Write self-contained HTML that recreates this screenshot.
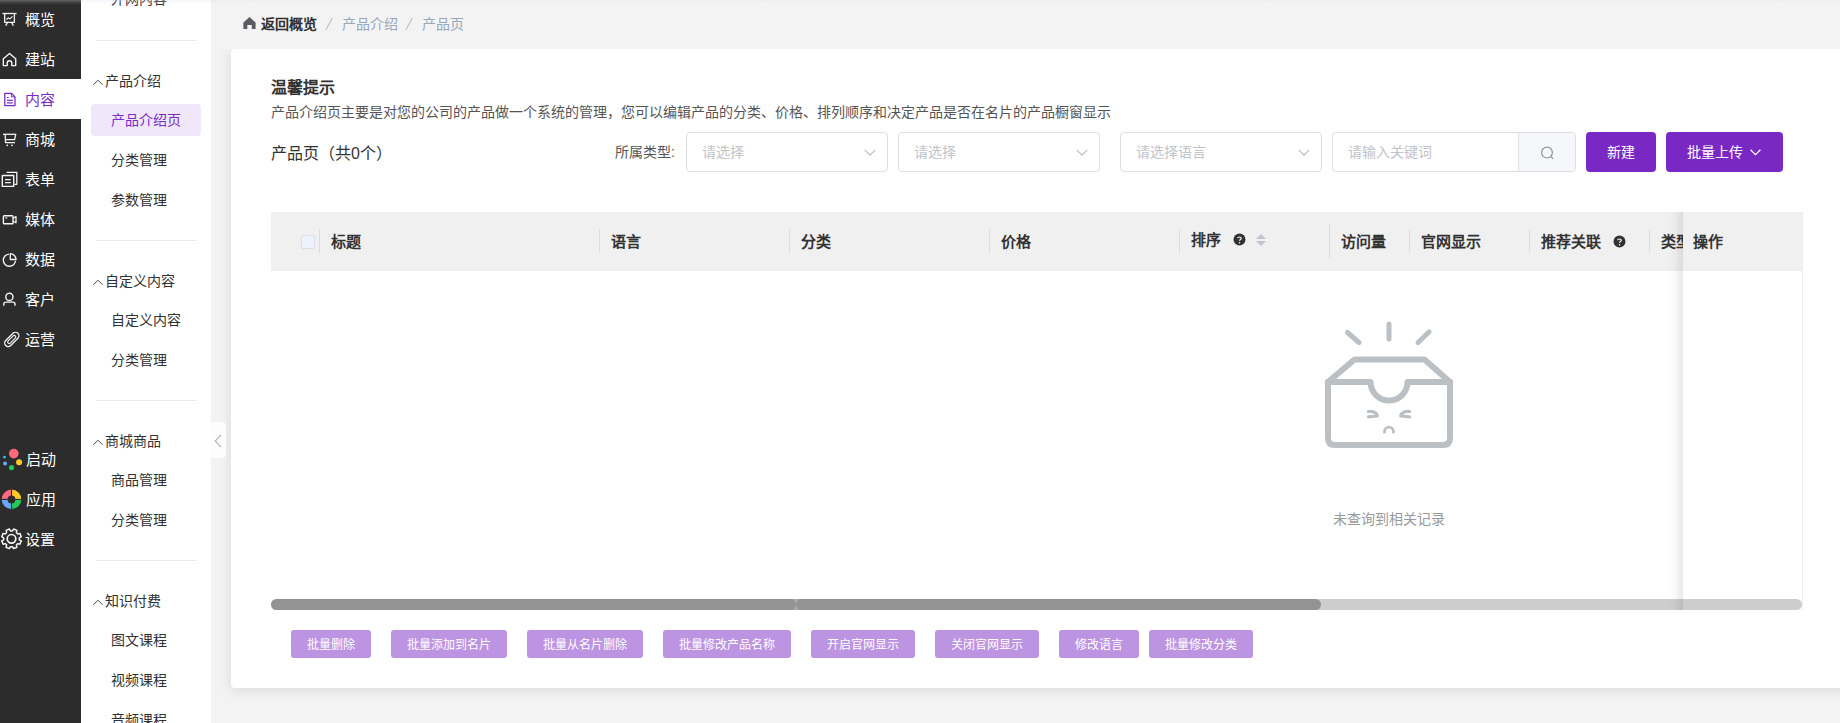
<!DOCTYPE html>
<html lang="zh-CN">
<head>
<meta charset="utf-8">
<title>产品页</title>
<style>
*{box-sizing:border-box;margin:0;padding:0}
html,body{width:1840px;height:723px;overflow:hidden}
body{position:relative;background:#f3f3f3;font-family:"Liberation Sans",sans-serif;font-size:14px;color:#333;-webkit-font-smoothing:antialiased}
.a{position:absolute;white-space:nowrap}
svg{position:absolute;overflow:visible}

#nav1 .t,#nav2 .g,#nav2 .i,.bc,.a,.ph,.th,.bb,.btn{text-align:justify;text-align-last:justify}
/* ---------- dark primary sidebar ---------- */
#nav1{position:absolute;left:0;top:0;width:81px;height:723px;background:#2c2c2c}
#nav1 .on{position:absolute;left:0;top:79px;width:81px;height:40px;background:#fff}
#nav1 .t{position:absolute;left:25px;height:40px;line-height:42px;font-size:15px;color:#fff;white-space:nowrap}
#nav1 .t.p{color:#7a2bc8}
#topshade{position:absolute;left:0;top:0;width:1840px;height:5px;background:linear-gradient(to bottom,rgba(222,226,238,.33),rgba(222,226,238,.12) 45%,rgba(222,226,238,0));z-index:50;pointer-events:none}

/* ---------- light secondary sidebar ---------- */
#nav2{position:absolute;left:81px;top:0;width:130px;height:723px;background:#fff}
#nav2 .hr{position:absolute;left:15px;width:100px;height:1px;background:#e6e9f2}
#nav2 .g{position:absolute;left:24px;height:40px;line-height:40px;font-size:14px;color:#303133;white-space:nowrap}
#nav2 .i{position:absolute;left:30px;height:40px;line-height:40px;font-size:14px;color:#303133;white-space:nowrap}
#nav2 .act{position:absolute;left:10px;top:104px;width:110px;height:32px;border-radius:4px;background:#f0e8fa}
#nav2 .i.p{color:#7a2bc8}

/* collapse handle */
#handle{position:absolute;left:211px;top:422px;width:15px;height:36px;background:#fdfdfd;border-radius:0 4px 4px 0}

/* ---------- breadcrumb ---------- */
.bc{position:absolute;top:12px;height:24px;line-height:24px;font-size:14px;white-space:nowrap}

/* ---------- card ---------- */
#cardclip{position:absolute;left:211px;top:49px;width:1629px;height:674px;overflow:hidden}
#card{position:absolute;left:20px;top:0;width:1700px;height:639px;background:#fff;border-radius:4px;box-shadow:0 2px 14px 0 rgba(0,0,0,.11)}

/* form controls */
.sel{position:absolute;top:132px;height:40px;border:1px solid #dcdfe6;border-radius:4px;background:#fff}
.ph{position:absolute;left:15px;top:0;height:38px;line-height:38px;font-size:14px;color:#c0c4cc;white-space:nowrap}
.btn{position:absolute;top:132px;height:40px;line-height:40px;border-radius:4px;background:#7a28c4;color:#fff;font-size:14px;white-space:nowrap}

/* table */
#thead{position:absolute;left:271px;top:212px;width:1531px;height:59px;background:#f0f0f0;border-bottom:1px solid #e9ecf3}
.th{position:absolute;height:24px;line-height:24px;font-size:15px;font-weight:bold;color:#333;white-space:nowrap}
.sp{position:absolute;width:1px;background:#dcdcdc}
#fix{position:absolute;left:1683px;top:212px;width:120px;height:398px;background:#fff;border-right:1px solid #ebeef5}
#fixsh{position:absolute;left:1669px;top:212px;width:14px;height:398px;background:linear-gradient(to right,rgba(0,0,0,0),rgba(0,0,0,.025) 45%,rgba(0,0,0,.085))}
#fixh{position:absolute;left:0;top:0;width:119px;height:59px;background:#f0f0f0;border-bottom:1px solid #e9ecf3}

/* bottom buttons */
.bb{position:absolute;top:630px;height:28px;line-height:30px;font-weight:500;border-radius:3px;background:#bd94e2;color:#fff;font-size:12px;padding:0 16px;white-space:nowrap}
</style>
</head>
<body>

<!-- ================= PRIMARY NAV ================= -->
<div id="nav1">
  <div class="on"></div>
  <div class="t" style="top:-1px;width:30.00px">概览</div>
  <div class="t" style="top:39px;width:30.00px">建站</div>
  <div class="t p" style="top:79px;width:30.00px">内容</div>
  <div class="t" style="top:119px;width:30.00px">商城</div>
  <div class="t" style="top:159px;width:30.00px">表单</div>
  <div class="t" style="top:199px;width:30.00px">媒体</div>
  <div class="t" style="top:239px;width:30.00px">数据</div>
  <div class="t" style="top:279px;width:30.00px">客户</div>
  <div class="t" style="top:319px;width:30.00px">运营</div>
  <div class="t" style="top:439px;left:26px;width:30.00px">启动</div>
  <div class="t" style="top:479px;left:26px;width:30.00px">应用</div>
  <div class="t" style="top:519px;left:25px;width:30.00px">设置</div>
  <!--NAV1ICONS-->
<svg style="left:0;top:0" width="81" height="723" viewBox="0 0 81 723" fill="none" stroke="#f5f5f5" stroke-width="1.3" stroke-linejoin="round">
<path d="M2.4 13.5 H16.6"/><path d="M4.7 13.5 V22.3 H14.4 V13.5"/><path d="M7.5 22.4 L5.7 25.8 M11.6 22.4 L13.4 25.8"/><path d="M6.6 19.5 L8.2 17.8 L10 18.9 L12.5 16.3" stroke-width="1.1"/>
<path d="M3.3 65.6 V58.7 L9.5 53.5 L15.7 58.7 V65.6 H11.8 V63 A2.3 2.3 0 0 0 7.2 63 V65.6 Z" stroke-width="1.4"/>
<g stroke="#7a2bc8"><path d="M4.8 93.3 H11.4 L15 96.9 V105.6 H4.8 Z"/><path d="M11.4 93.3 V96.9 H15" stroke-width="1"/><path d="M7 97.5 H8.8 M7 100.3 H12.8 M7 102.8 H12.8" stroke-width="1.2"/></g>
<path d="M3 134.3 H16.2"/><path d="M5.2 134.3 L5.5 142.6 H15"/><path d="M15.7 134.4 L14.6 139.6 H5.4"/><circle cx="7.3" cy="145.3" r="0.9" fill="#f5f5f5" stroke="none"/><circle cx="12" cy="145.3" r="0.9" fill="#f5f5f5" stroke="none"/>
<path d="M2.3 175.5 H13.7 V186.4 H2.3 Z" stroke-width="1.4"/><path d="M6.6 172.4 H16.8 V184.3 H14.4"/><path d="M5 179.6 H10.8 M5 182.6 H10.8"/>
<rect x="3.4" y="215.7" width="9.6" height="8" rx="0.8" stroke-width="1.4"/><path d="M13.2 218.2 L16 216.6 V222.8 L13.2 221.2"/><path d="M5.2 217.9 H7.4" stroke-width="1"/>
<path d="M9 254.1 A6.1 6.1 0 1 0 15.5 260.7" stroke-width="1.35"/><path d="M10.3 253.7 V259.5 H16.1 A5.9 5.9 0 0 0 10.3 253.7 Z"/>
<circle cx="9.4" cy="296.9" r="3.6" stroke-width="1.4"/><path d="M3.8 305.8 V304.2 A2.1 2.1 0 0 1 5.9 302.1 H12.9 A2.1 2.1 0 0 1 15 304.2 V305.8" stroke-width="1.4"/>
<g transform="translate(11.6 339.6) rotate(-45)" stroke-width="1.3"><path d="M6.6 -3.5 H-4.8 A3.5 3.5 0 0 0 -4.8 3.5 H5.4 A3.5 3.5 0 0 0 5.4 -3.5"/><path d="M3.8 -1.5 H-3.4 A1.5 1.5 0 0 0 -3.4 1.5 H3.8 A1.5 1.5 0 0 0 3.8 -1.5 Z" stroke-width="1.1"/></g>
<g stroke="none"><circle cx="13.8" cy="453.6" r="4.8" fill="#ff6b7a"/><circle cx="19.1" cy="462.2" r="3" fill="#ffc926"/><circle cx="11.5" cy="467.6" r="2.6" fill="#1fcc55"/><circle cx="5.1" cy="463.5" r="2" fill="#66a8ff"/><circle cx="4.5" cy="457.2" r="1.4" fill="#19c5f5"/></g>
<g stroke="none"><path d="M1.70 499.40 A9.8 9.8 0 0 1 11.50 489.60 L11.50 495.50 A3.9 3.9 0 0 0 7.60 499.40 Z" fill="#ff6b7a"/><path d="M11.50 489.60 A9.8 9.8 0 0 1 21.30 499.40 L15.40 499.40 A3.9 3.9 0 0 0 11.50 495.50 Z" fill="#ffc926"/><path d="M21.30 499.40 A9.8 9.8 0 0 1 11.50 509.20 L11.50 503.30 A3.9 3.9 0 0 0 15.40 499.40 Z" fill="#1fcc55"/><path d="M11.50 509.20 A9.8 9.8 0 0 1 1.70 499.40 L7.60 499.40 A3.9 3.9 0 0 0 11.50 503.30 Z" fill="#66a8ff"/><rect x="10.95" y="489.40" width="1.1" height="20" fill="#2c2c2c"/><rect x="1.50" y="498.85" width="20" height="1.1" fill="#2c2c2c"/></g>
<path d="M12.49 530.96 L13.60 529.02 L16.92 530.40 L16.34 532.56 L17.74 533.96 L19.90 533.38 L21.28 536.70 L19.34 537.81 L19.34 539.79 L21.28 540.90 L19.90 544.22 L17.74 543.64 L16.34 545.04 L16.92 547.20 L13.60 548.58 L12.49 546.64 L10.51 546.64 L9.40 548.58 L6.08 547.20 L6.66 545.04 L5.26 543.64 L3.10 544.22 L1.72 540.90 L3.66 539.79 L3.66 537.81 L1.72 536.70 L3.10 533.38 L5.26 533.96 L6.66 532.56 L6.08 530.40 L9.40 529.02 L10.51 530.96 Z" stroke-width="1.5"/>
<circle cx="11.5" cy="538.8" r="4.3" stroke-width="1.7"/>
</svg>
<!--/NAV1ICONS-->
</div>

<!-- ================= SECONDARY NAV ================= -->
<div id="nav2">
  <div class="i" style="top:-21px;width:56.00px">外网内容</div>
  <div class="hr" style="top:40px"></div>
  <div class="g" style="top:61px;width:56.00px">产品介绍</div>
  <div class="act"></div>
  <div class="i p" style="top:100px;width:70.00px">产品介绍页</div>
  <div class="i" style="top:140px;width:56.00px">分类管理</div>
  <div class="i" style="top:180px;width:56.00px">参数管理</div>
  <div class="hr" style="top:240px"></div>
  <div class="g" style="top:261px;width:70.00px">自定义内容</div>
  <div class="i" style="top:300px;width:70.00px">自定义内容</div>
  <div class="i" style="top:340px;width:56.00px">分类管理</div>
  <div class="hr" style="top:400px"></div>
  <div class="g" style="top:421px;width:56.00px">商城商品</div>
  <div class="i" style="top:460px;width:56.00px">商品管理</div>
  <div class="i" style="top:500px;width:56.00px">分类管理</div>
  <div class="hr" style="top:560px"></div>
  <div class="g" style="top:581px;width:56.00px">知识付费</div>
  <div class="i" style="top:620px;width:56.00px">图文课程</div>
  <div class="i" style="top:660px;width:56.00px">视频课程</div>
  <div class="i" style="top:700px;width:56.00px">音频课程</div>
  <!--NAV2ICONS-->
<svg style="left:0;top:0" width="130" height="723" viewBox="81 0 130 723" fill="none" stroke="#444" stroke-width="1"><path d="M93.5 84.7 L98 80.2 L102.5 84.7"/><path d="M93.5 284.7 L98 280.2 L102.5 284.7"/><path d="M93.5 444.7 L98 440.2 L102.5 444.7"/><path d="M93.5 604.7 L98 600.2 L102.5 604.7"/></svg>
<!--/NAV2ICONS-->
</div>

<!-- ================= CARD ================= -->
<div id="cardclip"><div id="card"></div></div>
<div id="handle"><svg style="left:3px;top:12px" width="8" height="14" viewBox="0 0 8 14"><path d="M7 0.8 L1.2 7 L7 13.2" fill="none" stroke="#b0b0b0" stroke-width="1.1"/></svg></div>
<!-- breadcrumb -->
<svg style="left:242.6px;top:17px" width="13" height="12" viewBox="0 0 13 12"><path d="M6.5 0 L12.6 5.4 L12.6 12 L8.8 12 L8.8 8 L4.3 8 L4.3 12 L0.4 12 L0.4 5.4 Z" fill="#5b5b63"/></svg>
<div class="bc" style="left:261px;font-weight:bold;color:#303133;width:56.00px">返回概览</div>
<svg style="left:324px;top:16px" width="10" height="15" viewBox="324 16 10 15"><path d="M325.9 29.8 L332.3 18" stroke="#c0c4cc" stroke-width="1.3" fill="none"/></svg>
<div class="bc" style="left:342px;color:#97a8be;width:56.00px">产品介绍</div>
<svg style="left:404px;top:16px" width="10" height="15" viewBox="404 16 10 15"><path d="M405.9 29.8 L412.3 18" stroke="#c0c4cc" stroke-width="1.3" fill="none"/></svg>
<div class="bc" style="left:422px;color:#97a8be;width:42.00px">产品页</div>

<!-- tips -->
<div class="a" style="left:271px;top:76px;height:24px;line-height:24px;font-size:16px;font-weight:bold;color:#333;width:64.00px">温馨提示</div>
<div class="a" style="left:271px;top:101px;height:22px;line-height:22px;font-size:14px;color:#555;width:840.00px">产品介绍页主要是对您的公司的产品做一个系统的管理，您可以编辑产品的分类、价格、排列顺序和决定产品是否在名片的产品橱窗显示</div>
<div class="a" style="left:271px;top:142px;height:24px;line-height:24px;font-size:16px;color:#333;width:120.91px">产品页（共0个）</div>

<!-- filters -->
<div class="a" style="left:615px;top:140px;height:24px;line-height:24px;font-size:14px;color:#555;width:59.89px">所属类型:</div>
<div class="sel" style="left:686px;width:202px"><div class="ph" style="width:42.00px">请选择</div>
  <svg style="left:177px;top:16px" width="12" height="7" viewBox="0 0 12 7"><path d="M0.7 0.9 L6 6 L11.3 0.9" fill="none" stroke="#c0c4cc" stroke-width="1.3"/></svg></div>
<div class="sel" style="left:898px;width:202px"><div class="ph" style="width:42.00px">请选择</div>
  <svg style="left:177px;top:16px" width="12" height="7" viewBox="0 0 12 7"><path d="M0.7 0.9 L6 6 L11.3 0.9" fill="none" stroke="#c0c4cc" stroke-width="1.3"/></svg></div>
<div class="sel" style="left:1120px;width:202px"><div class="ph" style="width:70.00px">请选择语言</div>
  <svg style="left:177px;top:16px" width="12" height="7" viewBox="0 0 12 7"><path d="M0.7 0.9 L6 6 L11.3 0.9" fill="none" stroke="#c0c4cc" stroke-width="1.3"/></svg></div>
<div class="sel" style="left:1332px;width:244px;overflow:hidden"><div class="ph" style="width:84.00px">请输入关键词</div>
  <div style="position:absolute;left:185px;top:0;width:58px;height:38px;background:#f5f7fa;border-left:1px solid #dcdfe6"></div>
  <svg style="left:207px;top:13px" width="15" height="15" viewBox="0 0 15 15"><circle cx="7" cy="6.6" r="5.4" fill="none" stroke="#909399" stroke-width="1.2"/><path d="M10.9 10.6 L13 12.9" stroke="#909399" stroke-width="1.3" fill="none"/></svg></div>
<div class="btn" style="left:1586px;width:70px;padding:0 21px">新建</div>
<div class="btn" style="left:1666px;width:117px"><span style="position:absolute;left:21px;top:0;width:56px;text-align:justify;text-align-last:justify">批量上传</span>
  <svg style="left:84px;top:17px" width="11" height="7" viewBox="0 0 11 7"><path d="M0.6 0.8 L5.5 5.6 L10.4 0.8" fill="none" stroke="#fff" stroke-width="1.3"/></svg></div>

<!-- table header -->
<div id="thead"></div>
<div style="position:absolute;left:301px;top:235px;width:14px;height:14px;border:1px solid #dcdfe6;border-radius:2px;background:#edf2fc"></div>
<div class="sp" style="left:319px;top:230px;height:23px"></div>
<div class="th" style="left:331px;top:230px;width:30.00px">标题</div>
<div class="sp" style="left:599px;top:230px;height:23px"></div>
<div class="th" style="left:611px;top:230px;width:30.00px">语言</div>
<div class="sp" style="left:789px;top:230px;height:23px"></div>
<div class="th" style="left:801px;top:230px;width:30.00px">分类</div>
<div class="sp" style="left:989px;top:230px;height:23px"></div>
<div class="th" style="left:1001px;top:230px;width:30.00px">价格</div>
<div class="sp" style="left:1179px;top:230px;height:23px"></div>
<div class="th" style="left:1191px;top:228px;width:30.00px">排序</div>
<svg style="left:1233px;top:233.4px" width="13" height="13" viewBox="0 0 13 13"><circle cx="6.5" cy="6.5" r="5.95" fill="#303133"/><path d="M4.7 5.3 C4.7 3.5 8.3 3.5 8.3 5.3 C8.3 6.5 6.5 6.5 6.5 7.8" fill="none" stroke="#fff" stroke-width="1.15"/><circle cx="6.5" cy="9.7" r="0.75" fill="#fff"/></svg>
<svg style="left:1256px;top:234px" width="10" height="13" viewBox="0 0 10 13"><path d="M5 0 L10 5 L0 5 Z" fill="#c0c4cc"/><path d="M0 7.1 L10 7.1 L5 12 Z" fill="#c0c4cc"/></svg>
<div class="sp" style="left:1329px;top:224px;height:34px"></div>
<div class="th" style="left:1341px;top:230px;width:45.00px">访问量</div>
<div class="sp" style="left:1409px;top:230px;height:23px"></div>
<div class="th" style="left:1421px;top:230px;width:60.00px">官网显示</div>
<div class="sp" style="left:1529px;top:230px;height:23px"></div>
<div class="th" style="left:1541px;top:230px;width:60.00px">推荐关联</div>
<svg style="left:1613px;top:235.2px" width="13" height="13" viewBox="0 0 13 13"><circle cx="6.5" cy="6.5" r="5.95" fill="#303133"/><path d="M4.7 5.3 C4.7 3.5 8.3 3.5 8.3 5.3 C8.3 6.5 6.5 6.5 6.5 7.8" fill="none" stroke="#fff" stroke-width="1.15"/><circle cx="6.5" cy="9.7" r="0.75" fill="#fff"/></svg>
<div class="sp" style="left:1649px;top:230px;height:23px"></div>
<div class="th" style="left:1661px;top:230px;width:30.00px">类型</div>

<!-- empty state -->
<svg style="left:1320px;top:316px" width="140" height="140" viewBox="1320 316 140 140" fill="none" stroke="#bbc0c4" stroke-width="6" stroke-linecap="round" stroke-linejoin="round">
  <path d="M1389 324 L1389 339" stroke-width="5"/>
  <path d="M1347.5 332.5 L1359 342.5" stroke-width="5"/>
  <path d="M1429 332 L1418 342.5" stroke-width="5"/>
  <path d="M1328 382 L1354.5 359.5 L1424.5 359.5 L1450 382"/>
  <path d="M1328 382 L1328 438 Q1328 445 1335 445 L1443 445 Q1450 445 1450 438 L1450 382"/>
  <path d="M1328 382 L1370.5 382 A18.5 18.5 0 0 0 1407.5 382 L1450 382"/>
  <path d="M1368.4 411.5 C1372.6 411 1376.8 412.6 1377.3 416 L1368.4 416.9" stroke-width="3.2"/>
  <path d="M1409.6 411.5 C1405.4 411 1401.2 412.6 1400.7 416 L1409.6 416.9" stroke-width="3.2"/>
  <path d="M1384.5 433.2 V431.6 A4.5 4.5 0 0 1 1393.5 431.6 V433.2" stroke-width="2.9" stroke-linecap="butt"/>
</svg>
<div class="a" style="left:1333px;top:508px;width:112px;height:22px;line-height:22px;font-size:14px;color:#999;text-align:justify">未查询到相关记录</div>

<!-- fixed right column -->
<div id="fix"><div id="fixh"></div><div class="th" style="left:10px;top:18px;width:30.00px">操作</div></div>

<!-- scrollbar -->
<div style="position:absolute;left:271px;top:599px;width:1531px;height:11px;border-radius:6px;background:#cdcdcd"></div>
<div style="position:absolute;left:271px;top:599px;width:1050px;height:11px;border-radius:6px;background:#939393"></div>
<svg style="left:792px;top:599px" width="8" height="11" viewBox="792 599 8 11"><path d="M792.9 599 L799.1 599 L796 604.3 Z M792.9 610 L799.1 610 L796 604.7 Z" fill="#a7a7a7"/></svg>

<div id="fixsh"></div>

<!-- batch buttons -->
<div class="bb" style="left:291px;width:80px">批量删除</div>
<div class="bb" style="left:391px;width:116px">批量添加到名片</div>
<div class="bb" style="left:527px;width:116px">批量从名片删除</div>
<div class="bb" style="left:663px;width:128px">批量修改产品名称</div>
<div class="bb" style="left:811px;width:104px">开启官网显示</div>
<div class="bb" style="left:935px;width:104px">关闭官网显示</div>
<div class="bb" style="left:1059px;width:80px">修改语言</div>
<div class="bb" style="left:1149px;width:104px">批量修改分类</div>


<div id="topshade"></div>
</body>
</html>
